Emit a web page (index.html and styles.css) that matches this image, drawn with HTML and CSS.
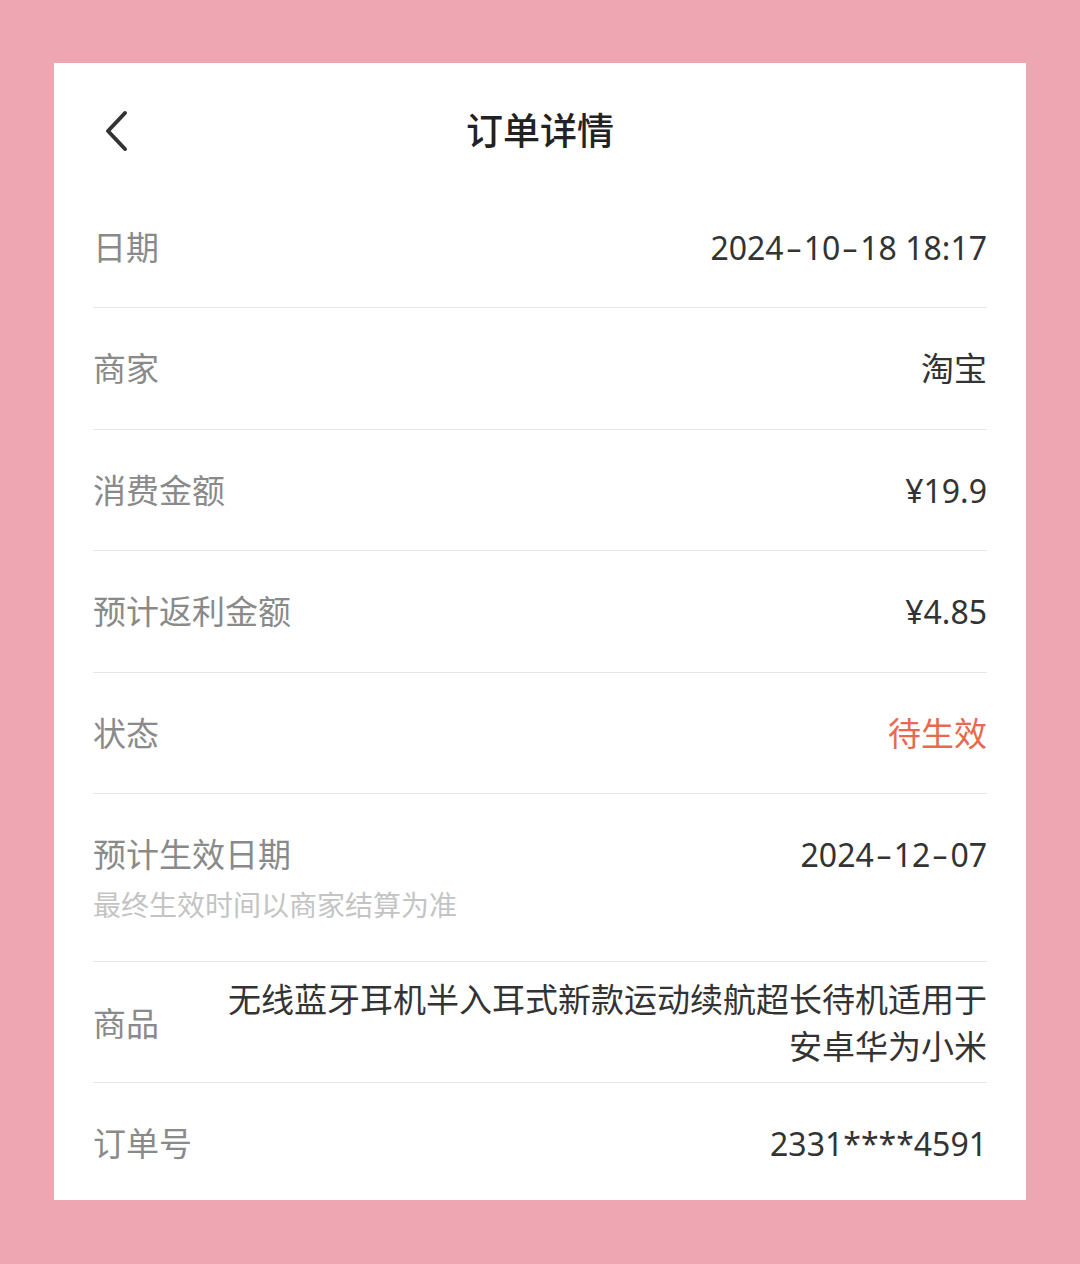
FILE: index.html
```html
<!DOCTYPE html>
<html lang="zh-CN">
<head>
<meta charset="utf-8">
<title>订单详情</title>
<link rel="stylesheet" href="styles.css">
</head>
<body>
<div class="card">
  <div class="header">
    <span class="back">
      <svg width="26" height="44" viewBox="0 0 26 44"><polyline points="22,4 5,22 22,40" fill="none" stroke="#333" stroke-width="4" stroke-linecap="round" stroke-linejoin="round"/></svg>
    </span>
    <h1 class="title">订单详情</h1>
  </div>
  <div class="row"><span class="label">日期</span><span class="value num">2024<span class="dash">-</span>10<span class="dash">-</span>18 18:17</span></div>
  <div class="row"><span class="label">商家</span><span class="value">淘宝</span></div>
  <div class="row"><span class="label">消费金额</span><span class="value num">¥19.9</span></div>
  <div class="row"><span class="label">预计返利金额</span><span class="value num">¥4.85</span></div>
  <div class="row"><span class="label">状态</span><span class="value status">待生效</span></div>
  <div class="row row-top">
    <div class="label-group">
      <span class="label">预计生效日期</span>
      <span class="sub">最终生效时间以商家结算为准</span>
    </div>
    <span class="value num">2024<span class="dash">-</span>12<span class="dash">-</span>07</span>
  </div>
  <div class="row row-product"><span class="label">商品</span><span class="value product">无线蓝牙耳机半入耳式新款运动续航超长待机适用于安卓华为小米</span></div>
  <div class="row row-last"><span class="label">订单号</span><span class="value num">2331****4591</span></div>
</div>
</body>
</html>
```

FILE: styles.css
```css
* { box-sizing: border-box; }
html, body { margin: 0; }
body {
  background: #eea6b2;
  padding: 63px 54px 64px;
  font-family: "Noto Sans", "Noto Sans CJK SC", sans-serif;
  color: #333;
}
.card {
  background: #fff;
  padding: 0 39px;
  height: 1137px;
  overflow: hidden;
}
.header {
  position: relative;
  height: 123.5px;
  padding-top: 44px;
  text-align: center;
}
.back {
  position: absolute;
  left: 10px;
  top: 46px;
  width: 26px;
  height: 44px;
  display: block;
}
.back svg { display: block; }
.title {
  margin: 0;
  font-size: 37px;
  line-height: 48px;
  font-weight: 500;
  color: #222;
}
.row {
  display: flex;
  justify-content: space-between;
  align-items: center;
  padding: 37px 0 36.5px;
  border-bottom: 1px solid #e6e6e6;
}
.label {
  font-size: 33px;
  line-height: 47px;
  color: #8a8a8a;
  white-space: nowrap;
}
.value {
  font-size: 33px;
  line-height: 47px;
  color: #333;
  text-align: right;
}
.num {
  font-size: 32px;
}
.dash {
  display: inline-block;
  width: 20px;
  text-align: center;
  transform: scaleX(1.6);
}
.status { color: #e8694e; }
.row-top {
  align-items: flex-start;
  padding: 37px 0 36px;
}
.label-group {
  display: flex;
  flex-direction: column;
}
.sub {
  margin-top: 7px;
  font-size: 28px;
  line-height: 40px;
  color: #c4c4c4;
}
.row-product {
  padding: 14px 0 12px;
}
.product {
  margin-left: 60px;
  flex: 1;
}
.row-last {
  border-bottom: none;
}
```
